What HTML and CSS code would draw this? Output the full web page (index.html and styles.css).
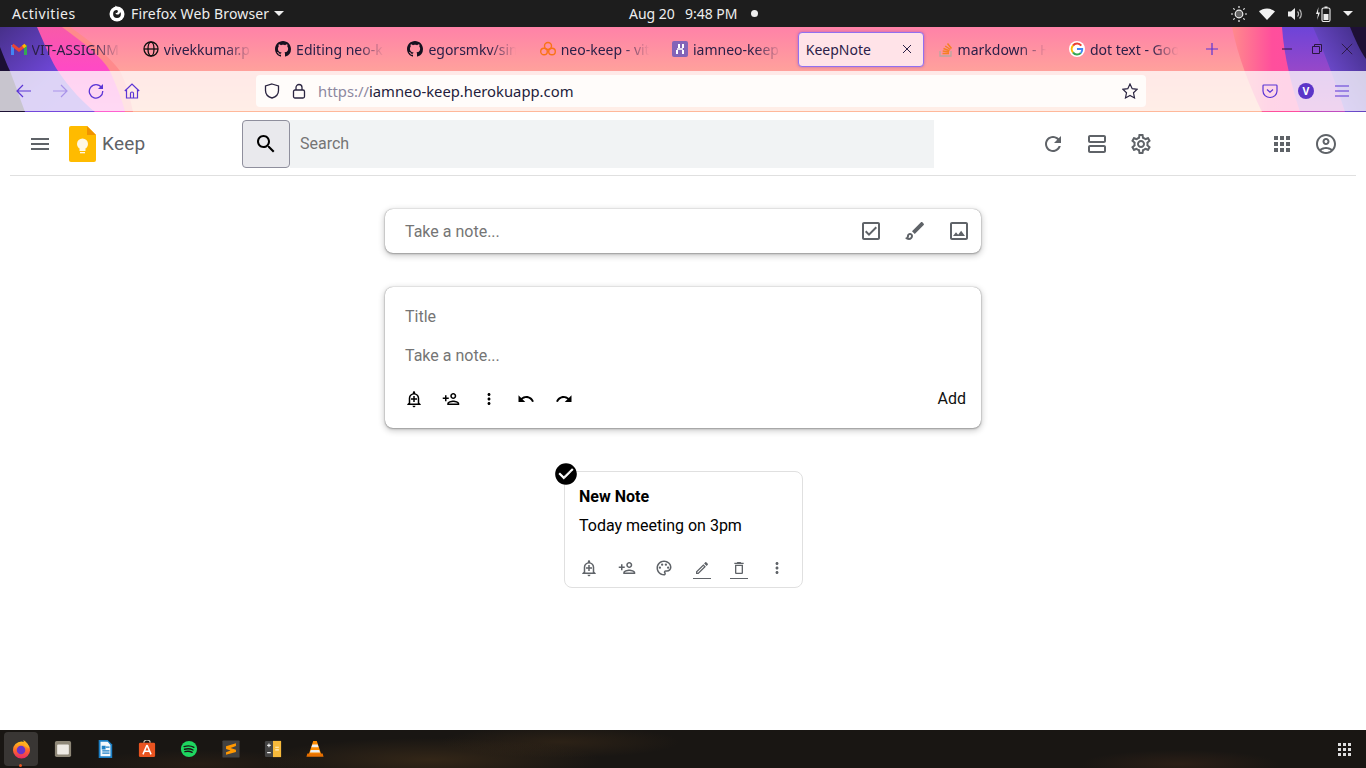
FILE: index.html
```html
<!DOCTYPE html>
<html lang="en">
<head>
<meta charset="utf-8">
<title>KeepNote</title>
<link rel="stylesheet" href="styles.css">
</head>
<body>
<svg class="sprite" xmlns="http://www.w3.org/2000/svg">
  <symbol id="i-menu" viewBox="0 0 24 24"><path d="M3 18h18v-2H3v2zm0-5h18v-2H3v2zm0-7v2h18V6H3z"/></symbol>
  <symbol id="i-search" viewBox="0 0 24 24"><path d="M15.5 14h-.79l-.28-.27C15.41 12.59 16 11.11 16 9.5 16 5.91 13.09 3 9.5 3S3 5.91 3 9.5 5.91 16 9.5 16c1.61 0 3.09-.59 4.23-1.57l.27.28v.79l5 4.99L20.49 19l-4.99-5zm-6 0C7.01 14 5 11.99 5 9.5S7.01 5 9.5 5 14 7.01 14 9.5 11.99 14 9.5 14z"/></symbol>
  <symbol id="i-refresh" viewBox="0 0 24 24"><path d="M17.65 6.35C16.2 4.9 14.21 4 12 4c-4.42 0-7.99 3.58-7.99 8s3.57 8 7.99 8c3.73 0 6.84-2.55 7.73-6h-2.08c-.82 2.33-3.04 4-5.65 4-3.31 0-6-2.69-6-6s2.69-6 6-6c1.66 0 3.14.69 4.22 1.78L13 11h7V4l-2.35 2.35z"/></symbol>
  <symbol id="i-agenda" viewBox="0 0 24 24"><path d="M19 13H5c-1.1 0-2 .9-2 2v4c0 1.1.9 2 2 2h14c1.1 0 2-.9 2-2v-4c0-1.1-.9-2-2-2zm0 6H5v-4h14v4zm0-16H5c-1.1 0-2 .9-2 2v4c0 1.1.9 2 2 2h14c1.1 0 2-.9 2-2V5c0-1.1-.9-2-2-2zm0 6H5V5h14v4z"/></symbol>
  <symbol id="i-settings" viewBox="0 0 24 24"><path d="M19.43 12.98c.04-.32.07-.64.07-.98 0-.34-.03-.66-.07-.98l2.11-1.65c.19-.15.24-.42.12-.64l-2-3.46c-.09-.16-.26-.25-.44-.25-.06 0-.12.01-.17.03l-2.49 1c-.52-.4-1.08-.73-1.69-.98l-.38-2.65C14.46 2.18 14.25 2 14 2h-4c-.25 0-.46.18-.49.42l-.38 2.65c-.61.25-1.17.59-1.69.98l-2.49-1c-.06-.02-.12-.03-.18-.03-.17 0-.34.09-.43.25l-2 3.46c-.13.22-.07.49.12.64l2.11 1.65c-.04.32-.07.65-.07.98 0 .33.03.66.07.98l-2.11 1.65c-.19.15-.24.42-.12.64l2 3.46c.09.16.26.25.44.25.06 0 .12-.01.17-.03l2.49-1c.52.4 1.08.73 1.69.98l.38 2.65c.03.24.24.42.49.42h4c.25 0 .46-.18.49-.42l.38-2.65c.61-.25 1.17-.59 1.69-.98l2.49 1c.06.02.12.03.18.03.17 0 .34-.09.43-.25l2-3.46c.12-.22.07-.49-.12-.64l-2.11-1.65zm-1.98-1.71c.04.31.05.52.05.73 0 .21-.02.43-.05.73l-.14 1.13.89.7 1.08.84-.7 1.21-1.27-.51-1.04-.42-.9.68c-.43.32-.84.56-1.25.73l-1.06.43-.16 1.13-.2 1.35h-1.4l-.19-1.35-.16-1.13-1.06-.43c-.43-.18-.83-.41-1.23-.71l-.91-.7-1.06.43-1.27.51-.7-1.21 1.08-.84.89-.7-.14-1.13c-.03-.31-.05-.54-.05-.74s.02-.43.05-.73l.14-1.13-.89-.7-1.08-.84.7-1.21 1.27.51 1.04.42.9-.68c.43-.32.84-.56 1.25-.73l1.06-.43.16-1.13.2-1.35h1.39l.19 1.35.16 1.13 1.06.43c.43.18.83.41 1.23.71l.91.7 1.06-.43 1.27-.51.7 1.21-1.07.85-.89.7.14 1.13zM12 8c-2.21 0-4 1.79-4 4s1.79 4 4 4 4-1.79 4-4-1.79-4-4-4zm0 6c-1.1 0-2-.9-2-2s.9-2 2-2 2 .9 2 2-.9 2-2 2z"/></symbol>
  <symbol id="i-apps" viewBox="0 0 24 24"><path d="M4 8h4V4H4v4zm6 12h4v-4h-4v4zm-6 0h4v-4H4v4zm0-6h4v-4H4v4zm6 0h4v-4h-4v4zm6-10v4h4V4h-4zm-6 4h4V4h-4v4zm6 6h4v-4h-4v4zm0 6h4v-4h-4v4z"/></symbol>
  <symbol id="i-account" viewBox="0 0 24 24"><path d="M12 2C6.48 2 2 6.48 2 12s4.48 10 10 10 10-4.48 10-10S17.52 2 12 2zM7.35 18.5C8.66 17.56 10.26 17 12 17s3.34.56 4.65 1.5C15.34 19.44 13.74 20 12 20s-3.34-.56-4.65-1.5zm10.79-1.38C16.45 15.8 14.32 15 12 15s-4.45.8-6.14 2.12C4.7 15.73 4 13.95 4 12c0-4.42 3.58-8 8-8s8 3.58 8 8c0 1.95-.7 3.73-1.86 5.12zM12 6c-1.93 0-3.5 1.57-3.5 3.5S10.07 13 12 13s3.5-1.57 3.5-3.5S13.93 6 12 6zm0 5c-.83 0-1.5-.67-1.5-1.5S11.17 8 12 8s1.5.67 1.5 1.5S12.83 11 12 11z"/></symbol>
  <symbol id="i-checkbox" viewBox="0 0 24 24"><path d="M19 3H5c-1.1 0-2 .9-2 2v14c0 1.1.9 2 2 2h14c1.1 0 2-.9 2-2V5c0-1.1-.9-2-2-2zm0 16H5V5h14v14zM17.99 9l-1.41-1.42-6.59 6.59-2.58-2.57-1.42 1.41 4 3.99z"/></symbol>
  <symbol id="i-brush" viewBox="0 0 24 24"><path d="M7 16c.55 0 1 .45 1 1 0 1.1-.9 2-2 2-.17 0-.33-.02-.5-.05.31-.55.5-1.21.5-1.95 0-.55.45-1 1-1M18.67 3c-.26 0-.51.1-.71.29L9 12.25 11.75 15l8.96-8.96c.39-.39.39-1.02 0-1.41l-1.34-1.34c-.2-.2-.45-.29-.7-.29zM7 14c-1.66 0-3 1.34-3 3 0 1.31-1.16 2-2 2 .92 1.22 2.49 2 4 2 2.21 0 4-1.79 4-4 0-1.66-1.34-3-3-3z"/></symbol>
  <symbol id="i-image" viewBox="0 0 24 24"><path d="M19 5v14H5V5h14m0-2H5c-1.1 0-2 .9-2 2v14c0 1.1.9 2 2 2h14c1.1 0 2-.9 2-2V5c0-1.1-.9-2-2-2zm-4.86 8.86l-3 3.87L9 13.14 6 17h12l-3.86-5.14z"/></symbol>
  <symbol id="i-alert" viewBox="0 0 24 24"><path d="M10.01 21.01c0 1.1.89 1.99 1.99 1.99s1.99-.89 1.99-1.99h-3.98zM12 6c2.76 0 5 2.24 5 5v7H7v-7c0-2.76 2.24-5 5-5zm0-4.5c-.83 0-1.5.67-1.5 1.5v1.17C7.36 4.85 5 7.65 5 11v6l-2 2v1h18v-1l-2-2v-6c0-3.35-2.36-6.15-5.5-6.83V3c0-.83-.67-1.5-1.5-1.5zM13 8h-2v3H8v2h3v3h2v-3h3v-2h-3V8z"/></symbol>
  <symbol id="i-person" viewBox="0 0 24 24"><path d="M15 12c2.21 0 4-1.79 4-4s-1.79-4-4-4-4 1.79-4 4 1.79 4 4 4zm0-6c1.1 0 2 .9 2 2s-.9 2-2 2-2-.9-2-2 .9-2 2-2zm0 8c-2.67 0-8 1.34-8 4v2h16v-2c0-2.66-5.33-4-8-4zm-6 4c.22-.72 3.31-2 6-2 2.7 0 5.8 1.29 6 2H9zm-3-3v-3h3v-2H6V7H4v3H1v2h3v3h2z"/></symbol>
  <symbol id="i-more" viewBox="0 0 24 24"><path d="M12 8c1.1 0 2-.9 2-2s-.9-2-2-2-2 .9-2 2 .9 2 2 2zm0 2c-1.1 0-2 .9-2 2s.9 2 2 2 2-.9 2-2-.9-2-2-2zm0 6c-1.1 0-2 .9-2 2s.9 2 2 2 2-.9 2-2-.9-2-2-2z"/></symbol>
  <symbol id="i-undo" viewBox="0 0 24 24"><path d="M12.5 8c-2.65 0-5.05.99-6.9 2.6L2 7v9h9l-3.62-3.62c1.39-1.16 3.16-1.88 5.12-1.88 3.54 0 6.55 2.31 7.6 5.5l2.37-.78C21.08 11.03 17.15 8 12.5 8z"/></symbol>
  <symbol id="i-redo" viewBox="0 0 24 24"><path d="M18.4 10.6C16.55 8.99 14.15 8 11.5 8c-4.65 0-8.58 3.03-9.96 7.22L3.9 16c1.05-3.19 4.05-5.5 7.6-5.5 1.95 0 3.73.72 5.12 1.88L13 16h9V7l-3.6 3.6z"/></symbol>
  <symbol id="i-palette" viewBox="0 0 24 24"><path d="M12 22C6.49 22 2 17.51 2 12S6.49 2 12 2s10 4.04 10 9c0 3.31-2.69 6-6 6h-1.77c-.28 0-.5.22-.5.5 0 .12.05.23.13.33.41.47.64 1.06.64 1.67 0 1.38-1.12 2.5-2.5 2.5zm0-18c-4.41 0-8 3.59-8 8s3.59 8 8 8c.28 0 .5-.22.5-.5 0-.16-.08-.28-.14-.35-.41-.46-.63-1.05-.63-1.65 0-1.38 1.12-2.5 2.5-2.5H16c2.21 0 4-1.79 4-4 0-3.86-3.59-7-8-7z"/><circle cx="6.5" cy="11.5" r="1.5"/><circle cx="9.5" cy="7.5" r="1.5"/><circle cx="14.5" cy="7.5" r="1.5"/><circle cx="17.5" cy="11.5" r="1.5"/></symbol>
  <symbol id="i-pencil" viewBox="0 0 24 24"><path d="M14.06 9.02l.92.92L5.92 19H5v-.92l9.06-9.06M17.66 3c-.25 0-.51.1-.7.29l-1.83 1.83 3.75 3.75 1.83-1.83c.39-.39.39-1.02 0-1.41l-2.34-2.34c-.2-.2-.45-.29-.71-.29zm-3.6 3.19L3 17.25V21h3.75L17.81 9.94l-3.75-3.75z"/></symbol>
  <symbol id="i-trash" viewBox="0 0 24 24"><path d="M16 9v10H8V9h8m-1.5-6h-5l-1 1H5v2h14V4h-3.5l-1-1zM18 7H6v12c0 1.1.9 2 2 2h8c1.1 0 2-.9 2-2V7z"/></symbol>
  <symbol id="i-check" viewBox="0 0 24 24"><path d="M12 2C6.48 2 2 6.48 2 12s4.48 10 10 10 10-4.48 10-10S17.52 2 12 2zm-2 15l-5-5 1.41-1.41L10 14.17l7.59-7.59L19 8l-9 9z"/></symbol>
  <symbol id="i-github" viewBox="0 0 16 16"><path d="M8 0C3.58 0 0 3.58 0 8c0 3.54 2.29 6.53 5.47 7.59.4.07.55-.17.55-.38 0-.19-.01-.82-.01-1.49-2.01.37-2.53-.49-2.69-.94-.09-.23-.48-.94-.82-1.13-.28-.15-.68-.52-.01-.53.63-.01 1.08.58 1.23.82.72 1.21 1.87.87 2.33.66.07-.52.28-.87.51-1.07-1.78-.2-3.64-.89-3.64-3.95 0-.87.31-1.59.82-2.15-.08-.2-.36-1.02.08-2.12 0 0 .67-.21 2.2.82.64-.18 1.32-.27 2-.27.68 0 1.36.09 2 .27 1.53-1.04 2.2-.82 2.2-.82.44 1.1.16 1.92.08 2.12.51.56.82 1.27.82 2.15 0 3.07-1.87 3.75-3.65 3.95.29.25.54.73.54 1.48 0 1.07-.01 1.93-.01 2.2 0 .21.15.46.55.38A8.013 8.013 0 0016 8c0-4.42-3.58-8-8-8z"/></symbol>
</svg>

<div class="topbar">
  <div class="top-left">
    <span class="top-activities">Activities</span>
    <span class="top-app">
      <svg class="top-ff" viewBox="0 0 16 16"><circle cx="8" cy="8.5" r="7.5" fill="#fff"/><path d="M8 4.6a3.9 3.9 0 1 0 3.9 3.9c0-1-.4-1.5-.9-2 .1 1.4-1 2.6-2.5 2.6-1.2 0-2-.8-2-1.8 1 .4 2.3-.2 2.4-1.4 0-.5-.4-1-.9-1.3z" fill="#1d1d1d"/><path d="M6 0l3 2-1.500 2.500z" fill="#fff"/></svg>
      <span class="top-app-name">Firefox Web Browser</span>
      <i class="caret"></i>
    </span>
  </div>
  <div class="top-center">
    <span class="top-date">Aug 20</span>
    <span>9:48 PM</span>
    <i class="top-dot"></i>
  </div>
  <div class="top-right">
    <svg class="sys" viewBox="0 0 16 16" fill="none" stroke="#eee" stroke-width="1.2"><circle cx="8" cy="8" r="3.800" fill="#eee" fill-opacity=".35"/><path d="M8 0v2M8 14v2M0 8h2M14 8h2M2.300 2.300l1.400 1.400M12.300 12.300l1.400 1.400M2.300 13.700l1.400-1.400M12.300 3.700l1.400-1.400"/></svg>
    <svg class="sys" viewBox="0 0 16 16"><path d="M0 5.500C2 3.700 5 2.500 8 2.500s6 1.200 8 3L8 14z" fill="#f2f2f2"/></svg>
    <svg class="sys" viewBox="0 0 16 16" fill="none"><path d="M1 5.500h3L8 2v12l-4-3.500H1z" fill="#eee"/><path d="M10.500 5.500a3.500 3.500 0 0 1 0 5M12.500 3.500a6.500 6.500 0 0 1 0 9" stroke="#bbb" stroke-width="1.200"/></svg>
    <svg class="sys" viewBox="0 0 16 16" fill="none"><path d="M3.500 1L1 8h2l-1 6 3-7.500H3z" fill="#eee"/><rect x="7" y="2" width="8" height="13.500" rx="1.500" stroke="#eee" stroke-width="1.100"/><rect x="9.500" y=".5" width="3" height="1.500" fill="#eee"/><rect x="8.500" y="8" width="5" height="6" fill="#eee"/></svg>
    <i class="caret caret-end"></i>
  </div>
</div>

<div class="chrome">
  <svg class="chrome-art" viewBox="0 0 1366 85" preserveAspectRatio="none">
    <defs>
      <linearGradient id="g-base" x1="0" y1="0" x2="0" y2="1"><stop offset="0" stop-color="#ff82a8"/><stop offset=".5" stop-color="#ffa09c"/><stop offset="1" stop-color="#ffb89a"/></linearGradient>
      <linearGradient id="g-left" x1="0" y1="0" x2="1" y2="1"><stop offset="0" stop-color="#47308a"/><stop offset=".55" stop-color="#6f47d8"/><stop offset="1" stop-color="#7a48e0"/></linearGradient>
      <linearGradient id="g-mag" x1="0" y1="0" x2="0" y2="1"><stop offset="0" stop-color="#f85aa8"/><stop offset=".55" stop-color="#ff48c8"/><stop offset="1" stop-color="#ff60d0"/></linearGradient>
      <linearGradient id="g-sal" x1="0" y1="0" x2="1" y2="0"><stop offset="0" stop-color="#ff8a8c"/><stop offset=".3" stop-color="#ff4f9c"/><stop offset="1" stop-color="#ff48a8"/></linearGradient>
      <linearGradient id="g-rp" x1="0" y1="0" x2="0" y2="1"><stop offset="0" stop-color="#6d44d8"/><stop offset=".55" stop-color="#9a48c8"/><stop offset="1" stop-color="#c04cc0"/></linearGradient>
      <linearGradient id="g-rd" x1="1" y1="0" x2="0" y2="1"><stop offset="0" stop-color="#3d2a80"/><stop offset=".6" stop-color="#6a48c8"/><stop offset="1" stop-color="#8a60f8"/></linearGradient>
    </defs>
    <rect width="1366" height="85" fill="url(#g-base)"/>
    <path d="M70 0C90 14 110 30 120 44C126 56 130 70 133 85H0V0z" fill="#ff8a8c"/>
    <path d="M62 0C84 16 102 30 110 44C116 58 122 72 125 85H0V0z" fill="url(#g-mag)"/>
    <path d="M37 0C45 18 52 36 58 44C70 62 84 76 95 85H0V0z" fill="url(#g-left)"/>
    <path d="M0 20C4 30 7 38 10 44C16 60 21 74 25 85H0z" fill="#1c1034"/>
    <path d="M1232 0C1238 30 1250 60 1262 85H1366V0z" fill="url(#g-sal)"/>
    <path d="M1282 0C1284 30 1292 60 1300 85H1366V0z" fill="url(#g-rp)"/>
    <path d="M1313 0C1322 20 1334 50 1345 85H1366V0z" fill="url(#g-rd)"/>
    <path d="M1350 0C1355 12 1360 24 1366 32V0z" fill="#1e1035"/>
  </svg>

  <div class="tabstrip">
    <div class="tab">
      <svg class="fav" viewBox="0 0 16 16" fill="none"><path d="M1.500 14V4" stroke="#4285f4" stroke-width="3"/><path d="M14.500 14V4" stroke="#34a853" stroke-width="3"/><path d="M1.500 4L8 9l6.500-5" stroke="#ea4335" stroke-width="3"/><path d="M14.500 4l-2.500 2" stroke="#fbbc04" stroke-width="3"/></svg>
      <span class="tab-label">VIT-ASSIGNM</span>
    </div>
    <div class="tab">
      <svg class="fav" viewBox="0 0 16 16" fill="none" stroke="#111" stroke-width="1.300"><circle cx="8" cy="8" r="7"/><ellipse cx="8" cy="8" rx="3" ry="7"/><path d="M1 8h14"/></svg>
      <span class="tab-label">vivekkumar.p</span>
    </div>
    <div class="tab">
      <svg class="fav fav-dark"><use href="#i-github"/></svg>
      <span class="tab-label">Editing neo-k</span>
    </div>
    <div class="tab">
      <svg class="fav fav-dark"><use href="#i-github"/></svg>
      <span class="tab-label">egorsmkv/sin</span>
    </div>
    <div class="tab">
      <svg class="fav" viewBox="0 0 16 16" fill="none" stroke="#f97316" stroke-width="1.400"><circle cx="8" cy="5" r="3.500"/><circle cx="4" cy="10.500" r="3.300"/><circle cx="12" cy="10.500" r="3.300"/></svg>
      <span class="tab-label">neo-keep - vit</span>
    </div>
    <div class="tab">
      <svg class="fav" viewBox="0 0 16 16"><rect width="16" height="16" rx="2" fill="#8464b8"/><path d="M4 3h2v4h2V3h0M4 9h2v4H4zM10 3h2v4h-2zM10 9h2v4h-2zM5 7.200h6v1.600H5z" fill="#fff"/></svg>
      <span class="tab-label">iamneo-keep</span>
    </div>
    <div class="tab tab-active">
      <div class="tab-box">
        <span class="tab-title">KeepNote</span>
        <svg class="tab-close" viewBox="0 0 10 10" fill="none" stroke="#2a2045" stroke-width="1"><path d="M1 1l8 8M9 1l-8 8"/></svg>
      </div>
    </div>
    <div class="tab">
      <svg class="fav fav-so" viewBox="0 0 16 16" fill="none"><path d="M2 10v5h11v-5" stroke="#b8a8a0" stroke-width="1.300"/><path d="M4.500 12.500h6.500M4.700 10l6.300.900M5.500 7.500l6 2.300M7.200 5l5.200 3.500M9.500 2.500l4 5" stroke="#f48024" stroke-width="1.500"/></svg>
      <span class="tab-label">markdown - H</span>
    </div>
    <div class="tab">
      <svg class="fav" viewBox="0 0 16 16" fill="none"><circle cx="8" cy="8" r="8" fill="#fff"/><path d="M12.300 4.600A5.300 5.300 0 0 0 4 4.500" stroke="#ea4335" stroke-width="2"/><path d="M4 4.500a5.300 5.300 0 0 0 0 7" stroke="#fbbc05" stroke-width="2"/><path d="M4 11.500a5.300 5.300 0 0 0 7.800.5" stroke="#34a853" stroke-width="2"/><path d="M11.800 12c1-1 1.600-2.500 1.400-4H8" stroke="#4285f4" stroke-width="2"/></svg>
      <span class="tab-label">dot text - Goo</span>
    </div>
    <svg class="newtab" viewBox="0 0 12 12" fill="none" stroke="#5b35d5" stroke-width="1.200"><path d="M6 0v12M0 6h12"/></svg>
    <div class="winctl">
      <svg class="win" viewBox="0 0 12 12" fill="none" stroke="#2a1840" stroke-width="1"><path d="M1 6h10"/></svg>
      <svg class="win" viewBox="0 0 12 12" fill="none" stroke="#2a1840" stroke-width="1"><path d="M1.500 3.500h7v7h-7zM3.500 3.500v-2h7v7h-2"/></svg>
      <svg class="win" viewBox="0 0 12 12" fill="none" stroke="#2a1840" stroke-width=".9"><path d="M.8.800l10.400 10.400M11.200.800L.8 11.200"/></svg>
    </div>
  </div>

  <div class="navbar">
    <div class="nav-btn"><svg viewBox="0 0 16 16" fill="none" stroke="#5b35d5" stroke-width="1.200"><path d="M15 8H1M7 2L1 8l6 6"/></svg></div>
    <div class="nav-btn nav-off"><svg viewBox="0 0 16 16" fill="none" stroke="#5b35d5" stroke-width="1.200"><path d="M1 8h14M9 2l6 6-6 6"/></svg></div>
    <div class="nav-btn"><svg viewBox="0 0 16 16" fill="none" stroke="#5b35d5" stroke-width="1.300"><path d="M13.500 4.500A6.700 6.700 0 1 0 14.700 8"/><path d="M15 1v5h-5z" fill="#5b35d5" stroke="none"/></svg></div>
    <div class="nav-btn"><svg viewBox="0 0 16 16" fill="none" stroke="#5b35d5" stroke-width="1.200"><path d="M.8 8L8 1l7.200 7M2.500 7v8h11V7M6.500 15v-4.500a1.500 1.500 0 0 1 3 0V15"/></svg></div>
    <div class="urlbar">
      <svg class="url-ic" viewBox="0 0 16 16" fill="none" stroke="#2a2440" stroke-width="1.300"><path d="M8 1l6.500 2v4.500c0 3.700-2.800 6.500-6.500 7.500-3.700-1-6.500-3.800-6.500-7.500V3z"/></svg>
      <svg class="url-ic url-lock" viewBox="0 0 16 16" fill="none" stroke="#2a2440" stroke-width="1.300"><rect x="2.500" y="7" width="11" height="8" rx="1.500"/><path d="M5 7V4.500a3 3 0 0 1 6 0V7"/></svg>
      <span class="url-text"><span class="url-scheme">https://</span>iamneo-keep.herokuapp.com</span>
      <svg class="url-star" viewBox="0 0 16 16" fill="none" stroke="#2a2440" stroke-width="1.200"><path d="M8 1l2.200 4.700 5 .6-3.700 3.500 1 5.100L8 12.400l-4.500 2.500 1-5.100L.8 6.300l5-.6z"/></svg>
    </div>
    <div class="nav-btn nav-pocket"><svg viewBox="0 0 16 16" fill="none" stroke="#5b35d5" stroke-width="1.200"><path d="M1.800 2h12.400c.5 0 .8.300.8.800V8a7 6.500 0 0 1-14 0V2.800c0-.5.300-.8.800-.8z"/><path d="M5 6.500l3 2.700 3-2.700"/></svg></div>
    <div class="nav-btn"><span class="avatar">V</span></div>
    <div class="nav-btn"><svg viewBox="0 0 16 16" fill="none" stroke="#5b35d5" stroke-width="1.200"><path d="M1 3h14M1 8h14M1 13h14"/></svg></div>
  </div>
</div>

<div class="page">
  <header class="app-header">
    <div class="brand">
      <button class="icon-btn menu-btn"><svg class="ic24 grey"><use href="#i-menu"/></svg></button>
      <svg class="logo" viewBox="0 0 27 36"><path d="M2 0h16l9 9v25a2 2 0 0 1-2 2H2a2 2 0 0 1-2-2V2a2 2 0 0 1 2-2z" fill="#ffbb00"/><path d="M18 0l9 9h-9z" fill="#f09300"/><circle cx="13.500" cy="18" r="5.500" fill="#fff8e4"/><rect x="10.500" y="23" width="6" height="2" fill="#fff8e4"/><rect x="11" y="26" width="5" height="1.300" fill="#fff8e4"/></svg>
      <span class="brand-name">Keep</span>
    </div>
    <div class="search">
      <button class="search-btn"><svg class="ic24"><use href="#i-search"/></svg></button>
      <div class="search-input">Search</div>
    </div>
    <div class="actions">
      <button class="icon-btn"><svg class="ic24 grey"><use href="#i-refresh"/></svg></button>
      <button class="icon-btn"><svg class="ic24 grey"><use href="#i-agenda"/></svg></button>
      <button class="icon-btn"><svg class="ic24 grey"><use href="#i-settings"/></svg></button>
    </div>
    <div class="actions">
      <button class="icon-btn"><svg class="ic24 grey"><use href="#i-apps"/></svg></button>
      <button class="icon-btn"><svg class="ic24 grey"><use href="#i-account"/></svg></button>
    </div>
  </header>

  <main class="board">
    <section class="card card-collapsed">
      <span class="placeholder">Take a note...</span>
      <div class="collapsed-tools">
        <button class="icon-btn"><svg class="ic24 grey"><use href="#i-checkbox"/></svg></button>
        <button class="icon-btn"><svg class="ic24 grey"><use href="#i-brush"/></svg></button>
        <button class="icon-btn"><svg class="ic24 grey"><use href="#i-image"/></svg></button>
      </div>
    </section>

    <section class="card card-editor">
      <div class="placeholder editor-title">Title</div>
      <div class="placeholder editor-body">Take a note...</div>
      <div class="editor-foot">
        <div class="tools editor-tools">
          <button class="tool"><svg class="ic18"><use href="#i-alert"/></svg></button>
          <button class="tool"><svg class="ic18"><use href="#i-person"/></svg></button>
          <button class="tool"><svg class="ic18"><use href="#i-more"/></svg></button>
          <button class="tool"><svg class="ic18"><use href="#i-undo"/></svg></button>
          <button class="tool"><svg class="ic18"><use href="#i-redo"/></svg></button>
        </div>
        <button class="add-btn">Add</button>
      </div>
    </section>

    <article class="note">
      <svg class="note-check"><use href="#i-check"/></svg>
      <h3 class="note-title">New Note</h3>
      <p class="note-body">Today meeting on 3pm</p>
      <div class="tools note-tools">
        <button class="tool"><svg class="ic18 grey"><use href="#i-alert"/></svg></button>
        <button class="tool"><svg class="ic18 grey"><use href="#i-person"/></svg></button>
        <button class="tool"><svg class="ic18 grey"><use href="#i-palette"/></svg></button>
        <button class="tool"><span class="underlined"><svg class="ic16 grey"><use href="#i-pencil"/></svg></span></button>
        <button class="tool"><span class="underlined"><svg class="ic16 grey"><use href="#i-trash"/></svg></span></button>
        <button class="tool"><svg class="ic18 grey"><use href="#i-more"/></svg></button>
      </div>
    </article>
  </main>
</div>

<footer class="dock">
  <div class="dock-item dock-active">
    <svg class="dock-ic" viewBox="0 0 20 20"><defs><linearGradient id="g-ff" x1="0" y1="0" x2="0" y2="1"><stop offset="0" stop-color="#ffc21a"/><stop offset=".5" stop-color="#ff6a2a"/><stop offset="1" stop-color="#e8266a"/></linearGradient></defs><circle cx="10" cy="10.500" r="9" fill="url(#g-ff)"/><path d="M12 0c3 2 6 5 6 9l-5-3z" fill="#ffb020"/><circle cx="9.500" cy="10.500" r="4.500" fill="#6a34c8"/></svg>
    <i class="dock-dot"></i>
  </div>
  <div class="dock-item"><svg class="dock-ic" viewBox="0 0 20 20"><rect x="1" y="1" width="18" height="18" rx="2" fill="#8f8878"/><rect x="3.500" y="5" width="13" height="11" rx="1" fill="#eeeae4"/></svg></div>
  <div class="dock-item"><svg class="dock-ic" viewBox="0 0 20 20"><path d="M3 0h10l5 5v15H3z" fill="#1c7fc4"/><path d="M5 2h8l3 3.500V18H5z" fill="#f4f8fc"/><path d="M7 7h3v3H7zM11 8h4M7 12h8M7 14.500h8" stroke="#1c7fc4" stroke-width="1.300" fill="#1c7fc4"/></svg></div>
  <div class="dock-item"><svg class="dock-ic" viewBox="0 0 20 20" fill="none"><path d="M6.500 3a3.500 3 0 0 1 7 0" stroke="#c8c0b0" stroke-width="1.300"/><rect x="1" y="3" width="18" height="16" rx="1.500" fill="#e95420"/><path d="M10 5.500L5.500 16M10 5.500l4.500 10.500M7 12.500h6" stroke="#fff" stroke-width="1.700"/></svg></div>
  <div class="dock-item"><svg class="dock-ic" viewBox="0 0 20 20" fill="none"><circle cx="10" cy="10" r="9" fill="#1ed760"/><path d="M4.500 7.300c4-1.200 8-.9 11 .8M5 10.300c3.400-1 6.800-.7 9.500.8M5.500 13c3-.8 5.700-.5 8 .7" stroke="#191414" stroke-width="1.500" stroke-linecap="round"/></svg></div>
  <div class="dock-item"><svg class="dock-ic" viewBox="0 0 20 20"><rect x=".5" y=".5" width="19" height="19" rx="1" fill="#424242"/><path d="M4.500 8.500L15.500 5v3.300L9.500 10.300l6 2v2.500L4.500 18v-3l5-1.700-5-1.800z" fill="#ff9800" transform="translate(0 -1.500)"/></svg></div>
  <div class="dock-item"><svg class="dock-ic" viewBox="0 0 20 20"><rect x="1" y="1" width="18" height="18" rx="1.500" fill="#444"/><rect x="10" y="1" width="9" height="18" fill="#f6b93b"/><path d="M3.500 6h4M5.500 4v4M3.500 14h4" stroke="#eee" stroke-width="1.200"/><path d="M12.500 8h4M12.500 11h4" stroke="#fff2cc" stroke-width="1.200"/></svg></div>
  <div class="dock-item"><svg class="dock-ic" viewBox="0 0 20 20"><path d="M8 1h4l5 15H3z" fill="#ff8c00"/><path d="M7 5h6l1 3H6zM5.300 11h9.400l1 3H4.300z" fill="#eee"/><path d="M1.500 15h17l1 3.500H.5z" fill="#e87000"/></svg></div>
  <div class="dock-grid"><i></i><i></i><i></i><i></i><i></i><i></i><i></i><i></i><i></i></div>
</footer>
</body>
</html>
```

FILE: styles.css
```css
* { box-sizing: border-box; }
html, body { margin: 0; height: 100%; }
body {
  display: flex;
  flex-direction: column;
  height: 768px;
  overflow: hidden;
  background: #fff;
  font-family: Roboto, sans-serif;
}
.sprite { display: none; }
button { border: 0; background: none; padding: 0; margin: 0; font: inherit; color: inherit; }
i { display: block; }
svg { display: block; }

/* top bar */
.topbar {
  flex: 0 0 27px;
  display: flex;
  align-items: center;
  background: #1d1d1d;
  color: #eee;
  font: 14px "Noto Sans", sans-serif;
}
.top-left { flex: 0 0 629px; display: flex; align-items: center; padding-left: 12px; }
.top-activities { width: 97px; letter-spacing: .55px; }
.top-app { display: flex; align-items: center; }
.top-app-name { letter-spacing: .15px; }
.top-ff { width: 16px; height: 17px; margin-right: 6px; }
.caret { width: 0; height: 0; border: 5px solid transparent; border-top: 5px solid #eee; border-bottom: 0; margin-left: 5px; }
.top-center { flex: 1; display: flex; align-items: center; }
.top-date { margin-right: 10px; }
.top-dot { width: 7px; height: 7px; border-radius: 50%; background: #eee; margin-left: 14px; }
.top-right { display: flex; align-items: center; gap: 12px; padding-right: 13px; }
.sys { width: 16px; height: 16px; }
.caret-end { margin-left: 0; }

/* browser chrome */
.chrome {
  flex: 0 0 85px;
  position: relative;
  display: flex;
  flex-direction: column;
  border-bottom: 1px solid #9a7a78;
  font: 14px "Noto Sans", sans-serif;
  color: #2b2048;
}
.chrome-art { position: absolute; left: 0; top: 0; width: 100%; height: 85px; }
.tabstrip { position: relative; flex: 0 0 44px; display: flex; align-items: center; }
.tab { flex: 0 0 132.3px; display: flex; align-items: center; padding-left: 10.5px; height: 44px; }
.fav { flex: 0 0 16px; width: 16px; height: 16px; margin-right: 5px; }
.fav-so { margin-left: 1px; margin-right: 4px; }
.fav-dark { fill: #16111f; }
.tab-label {
  display: block;
  width: 90px;
  white-space: nowrap;
  -webkit-mask-image: linear-gradient(90deg, #000 68%, transparent 98%);
  mask-image: linear-gradient(90deg, #000 68%, transparent 98%);
}
.tab-active { padding: 0 2px 0 4px; }
.tab-box {
  flex: 1;
  height: 35px;
  display: flex;
  align-items: center;
  justify-content: space-between;
  padding: 0 11px 0 7px;
  background: #ffe3e8;
  border: 1px solid #9270f0;
  border-radius: 4px;
  box-shadow: 0 0 3px rgba(90, 50, 200, .45);
}
.tab-close { width: 10px; height: 10px; }
.newtab { width: 12px; height: 12px; margin-left: 15px; }
.winctl { margin-left: auto; display: flex; padding-right: 4px; }
.win { width: 30px; height: 12px; padding: 0 9px; box-sizing: border-box; }
.navbar {
  position: relative;
  flex: 0 0 40px;
  display: flex;
  align-items: center;
  padding-left: 6px;
  background: rgba(255, 255, 255, .76);
}
.nav-btn { flex: 0 0 36px; height: 36px; display: flex; align-items: center; justify-content: center; }
.nav-btn svg { width: 16px; height: 16px; }
.nav-off { opacity: .4; }
.nav-pocket { margin-left: 106px; }
.urlbar {
  margin-left: 106px;
  flex: 0 0 890px;
  height: 32px;
  display: flex;
  align-items: center;
  padding: 0 8px;
  background: #fffcfa;
  border-radius: 4px;
  font-size: 14.8px;
}
.url-ic { width: 16px; height: 16px; }
.url-lock { margin-left: 11px; }
.url-text { margin-left: 11px; flex: 1; color: #241c3c; }
.url-scheme { color: #8d88a0; }
.url-star { width: 16px; height: 16px; }
.avatar {
  width: 16px;
  height: 16px;
  border-radius: 50%;
  background: #5b35c8;
  color: #fff;
  font: 700 10.5px/16px "Noto Sans", sans-serif;
  text-align: center;
}

/* app */
.page { flex: 1; min-height: 0; display: flex; flex-direction: column; }
.app-header {
  flex: 0 0 64px;
  margin: 0 10px;
  padding-top: 8px;
  display: flex;
  align-items: flex-start;
  gap: 97px;
  border-bottom: 1px solid #e0e0e0;
}
.brand { flex: 0 0 232px; margin-right: -97px; display: flex; align-items: center; height: 48px; }
.menu-btn { margin: 0 8px 0 9px; }
.logo { width: 27px; height: 36px; }
.brand-name { margin-left: 6px; padding-bottom: 2px; font-size: 19px; letter-spacing: .2px; color: #5f6368; }
.search { flex: 0 0 692px; display: flex; height: 48px; }
.search-btn {
  flex: 0 0 48px;
  display: flex;
  align-items: center;
  justify-content: center;
  background: #e9e9ed;
  border: 1px solid #8f8f9d;
  border-radius: 4px;
}
.search-input {
  flex: 1;
  display: flex;
  align-items: center;
  padding: 0 0 2px 10px;
  background: #f1f3f4;
  color: #757575;
  font-size: 16px;
}
.actions { display: flex; height: 48px; margin-right: 0; }
.icon-btn { flex: 0 0 44px; width: 44px; height: 44px; display: flex; align-items: center; justify-content: center; align-self: center; }
.menu-btn { flex: 0 0 42px; width: 42px; }
.ic24 { width: 24px; height: 24px; }
.ic18 { width: 18px; height: 18px; }
.ic16 { width: 16px; height: 16px; }
.grey { fill: #5f6368; }

.board { flex: 1; display: flex; flex-direction: column; align-items: center; padding-top: 33px; }
.card {
  width: 596px;
  background: #fff;
  border-radius: 8px;
  box-shadow: 0 0 1px rgba(0, 0, 0, .45), 0 1px 2px rgba(0, 0, 0, .25), 0 2px 6px 1px rgba(0, 0, 0, .2);
}
.placeholder { color: #757575; font-size: 16px; line-height: 20px; }
.card-collapsed { height: 44px; display: flex; align-items: center; justify-content: space-between; padding-left: 20px; }
.card-collapsed .placeholder { padding-top: 2px; }
.collapsed-tools { display: flex; margin-right: 0; }
.card-editor { margin-top: 34px; height: 141px; padding: 20px 15px 0 20px; display: flex; flex-direction: column; }
.editor-body { margin-top: 19px; }
.editor-foot { margin-top: 19px; display: flex; align-items: center; justify-content: space-between; height: 28px; }
.tools { display: flex; }
.editor-tools { margin-left: -10px; }
.tool { flex: 0 0 37.5px; width: 37.5px; height: 24px; display: flex; align-items: center; justify-content: center; }
.add-btn { font-size: 16px; color: #111; margin-bottom: 2px; }

.note {
  position: relative;
  margin-top: 43px;
  width: 239px;
  height: 117px;
  padding: 15px 14.5px 0;
  border: 1px solid #e0e0e0;
  border-radius: 8px;
  background: #fff;
}
.note-check { position: absolute; left: -12px; top: -11px; width: 26px; height: 26px; fill: #000; }
.note-title { margin: 0; font-size: 16px; line-height: 20px; font-weight: 700; color: #000; }
.note-body { margin: 9px 0 0; font-size: 16px; line-height: 20px; color: #000; }
.note-tools { margin-top: 20px; margin-left: -8.5px; }
.underlined { display: block; width: 18px; padding: 1px 1px 2px; border-bottom: 1px solid #5f6368; transform: translateY(1px); }

/* dock */
.dock {
  flex: 0 0 38px;
  display: flex;
  align-items: center;
  background:
    radial-gradient(ellipse 170px 22px at 430px 30px, rgba(90, 62, 30, .4), transparent 100%),
    radial-gradient(ellipse 120px 16px at 560px 12px, rgba(80, 55, 28, .35), transparent 100%),
    radial-gradient(ellipse 120px 14px at 200px 34px, rgba(70, 45, 25, .3), transparent 100%),
    radial-gradient(ellipse 100px 14px at 1180px 34px, rgba(85, 50, 30, .3), transparent 100%),
    #191613;
}
.dock-item { position: relative; flex: 0 0 42px; height: 38px; display: flex; align-items: center; justify-content: center; }
.dock-ic { width: 18px; height: 18px; }
.dock-active::before {
  content: "";
  position: absolute;
  left: 4px;
  top: 2px;
  width: 34px;
  height: 34px;
  border-radius: 4px;
  background: rgba(255, 255, 255, .14);
}
.dock-active .dock-ic { position: relative; width: 19px; height: 19px; }
.dock-dot { position: absolute; left: 19px; bottom: 1px; width: 3px; height: 3px; border-radius: 50%; background: #e95420; }
.dock-grid {
  margin-left: auto;
  margin-right: 15px;
  display: grid;
  grid-template-columns: repeat(3, 3px);
  gap: 2px;
}
.dock-grid i { width: 3px; height: 3px; background: #ddd; }
```
